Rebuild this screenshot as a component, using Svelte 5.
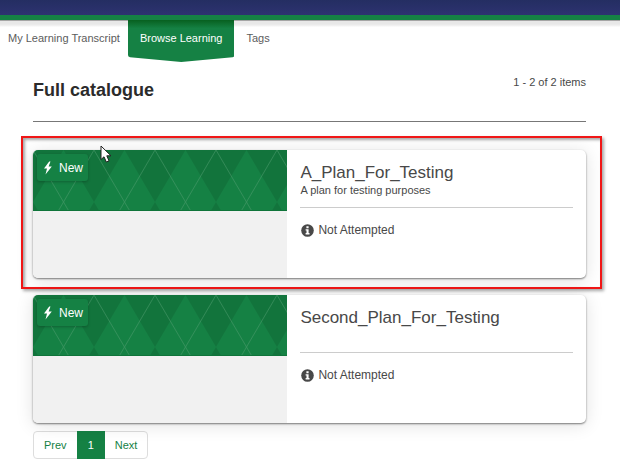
<script>
  const tabs = [
    { label: 'My Learning Transcript', active: false },
    { label: 'Browse Learning', active: true },
    { label: 'Tags', active: false }
  ];

  const plans = [
    {
      title: 'A_Plan_For_Testing',
      description: 'A plan for testing purposes',
      status: 'Not Attempted',
      highlighted: true
    },
    { title: 'Second_Plan_For_Testing', description: '', status: 'Not Attempted', highlighted: false }
  ];
</script>

<header class="masthead"></header>

<nav class="tabs" aria-label="Learning">
  {#each tabs as tab}
    <a href="#top" class="tab" class:active={tab.active} aria-current={tab.active ? 'page' : undefined}>
      {#if tab.active}
        <svg class="pennant" viewBox="0 0 106 42" preserveAspectRatio="none" aria-hidden="true">
          <defs>
            <linearGradient id="pennant-fill" x1="0" y1="0" x2="0" y2="1">
              <stop offset="0" stop-color="#07601f" />
              <stop offset="0.2" stop-color="#158144" />
            </linearGradient>
          </defs>
          <path d="M0 0H106V35Q106 37 104 37.200L53 42L2 37.200Q0 37 0 35Z" fill="url(#pennant-fill)" />
        </svg>
      {/if}
      <span>{tab.label}</span>
    </a>
  {/each}
</nav>

<main>
  <div class="heading">
    <h1>Full catalogue</h1>
    <p>1 - 2 of 2 items</p>
  </div>

  <div class="list">
    {#each plans as plan, i}
      <article class="card">
        <div class="media">
          <div class="banner">
            <svg class="argyle" aria-hidden="true">
              <defs>
                <pattern id="argyle-{i}" width="61" height="104" patternUnits="userSpaceOnUse">
                  <rect width="61" height="104" fill="#12743c" />
                  <path d="M30.500 0L61 52L30.500 104L0 52Z" fill="#158144" />
                  <path d="M0 0L61 104M61 0L0 104" stroke="#4b9a6c" stroke-width="0.800" opacity="0.700" />
                </pattern>
              </defs>
              <rect width="100%" height="100%" fill="url(#argyle-{i})" />
            </svg>
            <span class="badge">
              <svg width="10" height="14" viewBox="0 0 10 14" aria-hidden="true">
                <path d="M6.200 0.500L1 7.500H4L2.500 13.500L8.800 5.500H5.600L7.500 0.500Z" fill="#fff" />
              </svg>
              New
            </span>
          </div>
        </div>
        <div class="body">
          <div class="summary">
            <h2>{plan.title}</h2>
            <p>{plan.description}</p>
          </div>
          <div class="status">
            <svg width="13" height="13" viewBox="0 0 13 13" aria-hidden="true">
              <circle cx="6.500" cy="6.500" r="6.300" fill="#484848" />
              <path d="M5.400 2.300H7.600V4.200H5.400ZM4.600 5.200H7.600V9H8.500V10.400H4.600V9H5.500V6.500H4.600Z" fill="#fff" />
            </svg>
            <span>{plan.status}</span>
          </div>
        </div>
        {#if plan.highlighted}
          <div class="frame"></div>
          <svg class="pointer" width="12" height="18" viewBox="0 0 12 18" aria-hidden="true">
            <path
              d="M1 1V14.500L4 11.800L6.300 17L9 15.800L6.800 10.800H11Z"
              fill="#fff"
              stroke="#222"
              stroke-width="1"
            />
          </svg>
        {/if}
      </article>
    {/each}
  </div>

  <nav class="pager" aria-label="Pages">
    <a href="#prev">Prev</a>
    <a href="#page-1" class="current" aria-current="page">1</a>
    <a href="#next">Next</a>
  </nav>
</main>

<style>
  :global(body) {
    background: #fff;
    color: #484848;
    font-family: 'Liberation Sans', Arial, sans-serif;
    font-size: 11px;
    line-height: 14px;
  }

  h1,
  h2,
  p {
    margin: 0;
  }

  a {
    color: inherit;
    text-decoration: none;
  }

  .masthead {
    height: 15px;
    background: linear-gradient(#242e62, #2d3270);
    border-bottom: 5px solid #158144;
  }

  .tabs {
    display: flex;
    height: 42px;
    background: linear-gradient(#a5a5a5 0 1px, #e8e8e8 1px 4px, #f4f4f4 6px, #fff 7px);
  }

  .tab {
    position: relative;
    box-sizing: border-box;
    height: 42px;
    padding: 11px 12px 0;
    color: #5c5c5c;
    white-space: nowrap;
  }

  .tab:first-child {
    padding-left: 8px;
    padding-right: 8px;
  }

  .tab span {
    position: relative;
  }

  .tab.active {
    color: #fff;
  }

  .pennant {
    position: absolute;
    inset: 0;
    width: 100%;
    height: 100%;
  }

  main {
    padding: 0 34px 8px 33px;
  }

  .heading {
    display: flex;
    justify-content: space-between;
    box-sizing: border-box;
    height: 60px;
    padding-top: 13px;
    border-bottom: 1px solid #777;
  }

  h1 {
    padding-top: 5px;
    color: #2b2b2b;
    font-size: 18px;
    line-height: 20px;
  }

  .list {
    display: grid;
    gap: 17px;
    padding-top: 28px;
  }

  .card {
    position: relative;
    display: flex;
    min-height: 128px;
    border-radius: 5px;
    background: #fff;
    box-shadow:
      0 1px 2px rgba(0, 0, 0, 0.5),
      0 2px 18px rgba(0, 0, 0, 0.12);
  }

  .media {
    flex: 0 0 46%;
    overflow: hidden;
    border-radius: 5px 0 0 5px;
    background: #f1f1f1;
  }

  .banner {
    position: relative;
    height: 61px;
    padding: 4px;
    box-sizing: border-box;
    border-bottom: 1px solid #0f743a;
  }

  .argyle {
    position: absolute;
    inset: 0;
    width: 100%;
    height: 100%;
  }

  .badge {
    position: relative;
    display: inline-flex;
    align-items: center;
    gap: 6px;
    height: 27px;
    padding: 0 5px 0 6px;
    border-radius: 3px;
    background: #158144;
    box-shadow: 0 1px 3px rgba(0, 0, 0, 0.25);
    color: #fff;
    font-size: 12px;
  }

  .body {
    flex: 1;
    min-width: 0;
    padding: 13px;
  }

  .summary {
    box-sizing: border-box;
    height: 45px;
    border-bottom: 1px solid #ccc;
  }

  h2 {
    font-size: 17px;
    font-weight: 400;
    line-height: 20px;
  }

  .summary p {
    line-height: 14px;
  }

  .status {
    display: flex;
    align-items: center;
    gap: 4px;
    padding: 15px 1px 0;
    font-size: 12px;
  }

  .frame {
    position: absolute;
    inset: -14px -16px -11px -12px;
    border: 2px solid #f01616;
    box-shadow:
      2px 2px 3px rgba(0, 0, 0, 0.35),
      inset 2px 2px 3px rgba(0, 0, 0, 0.35);
    pointer-events: none;
  }

  .pointer {
    position: absolute;
    top: -5px;
    left: 67px;
  }

  .pager {
    display: inline-flex;
    margin-top: 8px;
    border: 1px solid #ddd;
    border-radius: 4px;
    background: #fff;
    color: #158144;
  }

  .pager a {
    padding: 6px 10px;
  }

  .pager .current {
    margin: -1px 0;
    padding: 7px 11px;
    background: #158144;
    color: #fff;
  }
</style>
